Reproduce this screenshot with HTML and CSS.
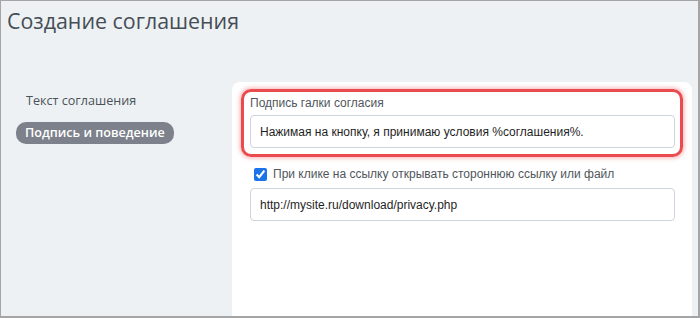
FILE: index.html
```html
<!DOCTYPE html>
<html lang="ru">
<head>
  <meta charset="UTF-8" />
  <title>Создание соглашения</title>
  <link rel="stylesheet" href="styles.css">
</head>
<body>
  <div class="frame">
    <h1 class="page-title">Создание соглашения</h1>

    <div class="layout">
      <!-- Sidebar -->
      <nav class="side-nav">
        <a href="#" class="nav-item">Текст соглашения</a>
        <a href="#" class="nav-item active">Подпись и поведение</a>
      </nav>

      <!-- Form panel -->
      <section class="panel">
        <div class="field highlight">
          <label class="field-label">Подпись галки согласия</label>
          <input class="text-input" type="text" value="Нажимая на кнопку, я принимаю условия %соглашения%." />
        </div>

        <div class="field">
          <label class="check-row">
            <input type="checkbox" checked />
            <span>При клике на ссылку открывать стороннюю ссылку или файл</span>
          </label>
          <input class="text-input" type="text" value="http://mysite.ru/download/privacy.php" />
        </div>
      </section>
    </div>
  </div>
</body>
</html>
```

FILE: styles.css
```css
html, body {
  margin: 0;
  padding: 0;
}

body {
  width: 700px;
  height: 318px;
  overflow: hidden;
  font-family: 'Open Sans', sans-serif;
}

.frame {
  box-sizing: border-box;
  width: 700px;
  height: 318px;
  border: 1px solid #a5a5a5;
  border-width: 1px 2px 2px 1px;
  background-color: #edf1f4;
  overflow: hidden;
}

.page-title {
  margin: 0;
  padding: 5px 0 0 6px;
  font-size: 21.4px;
  font-weight: 400;
  color: #454d55;
  line-height: 30px;
}

.layout {
  display: flex;
  margin-top: 46px;
}

/* Sidebar */
.side-nav {
  width: 231px;
  display: flex;
  flex-direction: column;
  align-items: flex-start;
  padding-top: 9px;
  gap: 11px;
}

.nav-item {
  font-size: 12.6px;
  color: #4c5258;
  text-decoration: none;
  padding: 1px 10px;
  margin-left: 15px;
  line-height: 18px;
  border-radius: 10px;
}

.nav-item.active {
  margin-left: 15px;
  padding: 2px 9px 2px;
  background-color: #7c818b;
  color: #fff;
  font-weight: 600;
}

/* Panel */
.panel {
  width: 460px;
  height: 260px;
  background: #fff;
  border-radius: 8px 8px 0 0;
  box-sizing: border-box;
  padding: 7px 9px 0 9px;
  font-family: 'Liberation Sans', Arial, sans-serif;
}

.field {
  padding: 0 8px;
}

.highlight {
  border: 3px solid #ea4b4f;
  border-radius: 10px;
  box-shadow: 0 0 4px 1px rgba(234, 75, 79, 0.45);
  padding: 2px 5px 6px 6px;
}

.field-label {
  display: block;
  font-size: 12px;
  color: #50565c;
  line-height: 18px;
  margin-bottom: 3px;
}

.text-input {
  box-sizing: border-box;
  width: 425px;
  height: 33px;
  border: 1px solid #cfd5dc;
  border-radius: 4px;
  padding: 0 9px;
  font-family: 'Liberation Sans', Arial, sans-serif;
  font-size: 12px;
  color: #1f1f1f;
  background: #fff;
  outline: none;
}

.field + .field {
  margin-top: 9px;
  padding-left: 9px;
}

.check-row {
  display: flex;
  align-items: center;
  gap: 6px;
  font-size: 12px;
  color: #50565c;
  margin-bottom: 6px;
  padding-left: 4px;
  line-height: 16px;
}

.check-row input {
  margin: 0;
  width: 13px;
  height: 13px;
  accent-color: #1a73e8;
}
```
